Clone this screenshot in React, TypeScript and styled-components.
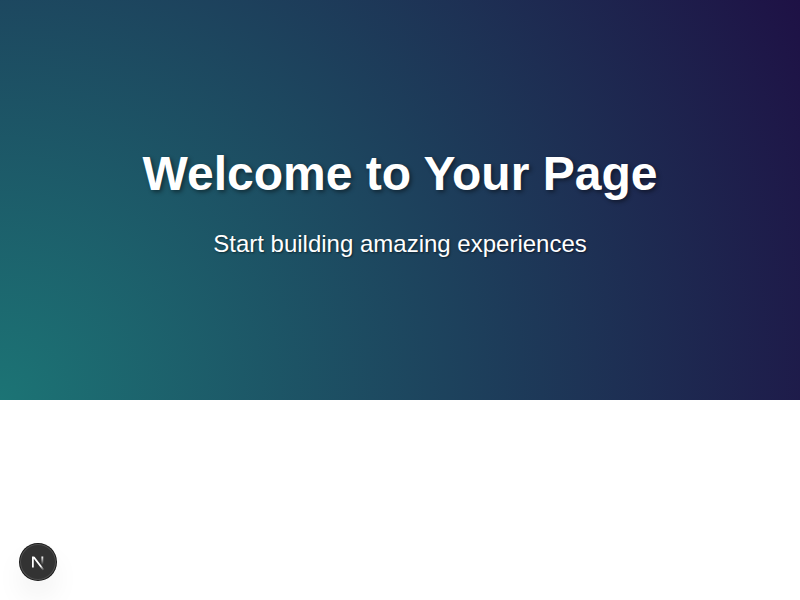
import styled, { createGlobalStyle } from "styled-components";

const GlobalStyle = createGlobalStyle`
  * { box-sizing: border-box; }
  body {
    margin: 0;
    background: #fff;
    font-family: "Liberation Sans", Arial, sans-serif;
  }
`;

const Hero = styled.section`
  height: 400px;
  padding-top: 6px;
  display: flex;
  flex-direction: column;
  align-items: center;
  justify-content: center;
  text-align: center;
  color: #fff;
  background: radial-gradient(circle at bottom left, #1c7475, #1e1145);
`;

const Title = styled.h1`
  margin: 0 0 22px;
  font-size: 48px;
  line-height: 60px;
  font-weight: 700;
  text-shadow: 2px 2px 4px rgba(0, 0, 0, 0.45);
`;

const Subtitle = styled.p`
  margin: 0;
  font-size: 24px;
  line-height: 36px;
  text-shadow: 1px 1px 2px rgba(0, 0, 0, 0.5);
`;

const DevButton = styled.button`
  position: fixed;
  left: 20px;
  bottom: 20px;
  width: 36px;
  height: 36px;
  padding: 0;
  border: 0;
  border-radius: 50%;
  display: flex;
  align-items: center;
  justify-content: center;
  background: #333;
  box-shadow: 0 0 0 1px #171717, inset 0 0 0 1px hsla(0, 0%, 100%, 0.14),
    0 16px 32px -8px rgba(0, 0, 0, 0.2);

  svg {
    flex-shrink: 0;
  }
`;

const LogoMark = () => (
  <svg width="40" height="40" viewBox="0 0 40 40" fill="none" aria-hidden="true">
    <defs>
      <linearGradient id="diagonal" x1="9.95555" y1="11.1226" x2="15.4778" y2="17.9671" gradientUnits="userSpaceOnUse">
        <stop stopColor="white" />
        <stop offset="0.604072" stopColor="white" stopOpacity="0" />
        <stop offset="1" stopColor="white" stopOpacity="0" />
      </linearGradient>
      <linearGradient id="stem" x1="11.8222" y1="1.40039" x2="11.791" y2="9.62542" gradientUnits="userSpaceOnUse">
        <stop stopColor="white" />
        <stop offset="1" stopColor="white" stopOpacity="0" />
      </linearGradient>
      <mask id="corner">
        <rect width="100%" height="100%" fill="white" />
        <rect width="5" height="1.5" fill="black" />
      </mask>
    </defs>
    <g transform="translate(12.5, 13)">
      <path d="M13.3 15.2 L2.34 1 V12.6" stroke="url(#diagonal)" strokeWidth="1.86" mask="url(#corner)" />
      <path d="M11.825 1.5 V13.1" stroke="url(#stem)" strokeWidth="1.86" />
    </g>
  </svg>
);

export default function App() {
  return (
    <>
      <GlobalStyle />
      <Hero>
        <Title>Welcome to Your Page</Title>
        <Subtitle>Start building amazing experiences</Subtitle>
      </Hero>
      <DevButton aria-label="Open developer tools">
        <LogoMark />
      </DevButton>
    </>
  );
}
